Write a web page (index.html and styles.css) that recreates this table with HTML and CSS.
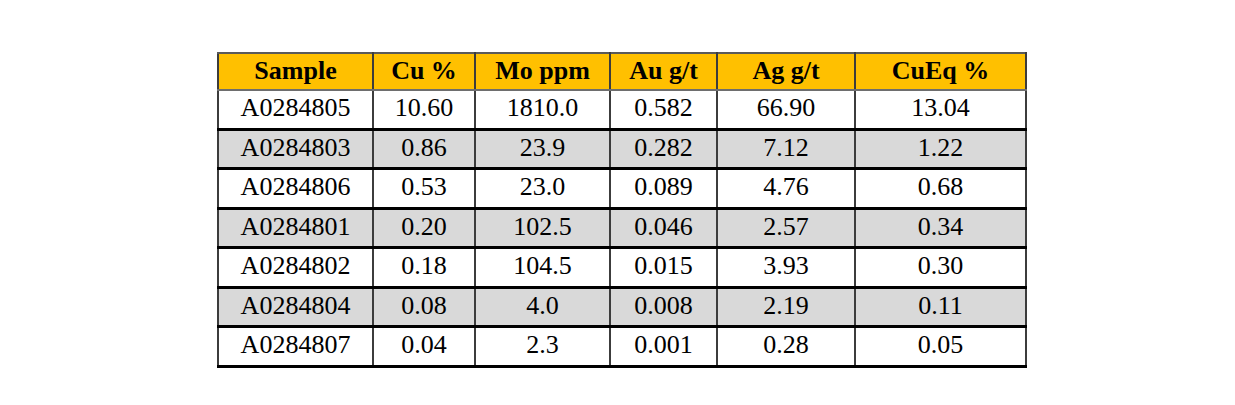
FILE: index.html
```html
<!DOCTYPE html>
<html>
<head>
<meta charset="utf-8">
<link rel="stylesheet" href="styles.css">
</head>
<body>
<div class="page">
<table class="assay">
  <colgroup>
    <col class="c1"><col class="c2"><col class="c3"><col class="c4"><col class="c5"><col class="c6">
  </colgroup>
  <thead>
    <tr><th>Sample</th><th>Cu %</th><th>Mo ppm</th><th>Au g/t</th><th>Ag g/t</th><th>CuEq %</th></tr>
  </thead>
  <tbody>
    <tr><td>A0284805</td><td>10.60</td><td>1810.0</td><td>0.582</td><td>66.90</td><td>13.04</td></tr>
    <tr class="alt"><td>A0284803</td><td>0.86</td><td>23.9</td><td>0.282</td><td>7.12</td><td>1.22</td></tr>
    <tr><td>A0284806</td><td>0.53</td><td>23.0</td><td>0.089</td><td>4.76</td><td>0.68</td></tr>
    <tr class="alt"><td>A0284801</td><td>0.20</td><td>102.5</td><td>0.046</td><td>2.57</td><td>0.34</td></tr>
    <tr><td>A0284802</td><td>0.18</td><td>104.5</td><td>0.015</td><td>3.93</td><td>0.30</td></tr>
    <tr class="alt"><td>A0284804</td><td>0.08</td><td>4.0</td><td>0.008</td><td>2.19</td><td>0.11</td></tr>
    <tr><td>A0284807</td><td>0.04</td><td>2.3</td><td>0.001</td><td>0.28</td><td>0.05</td></tr>
  </tbody>
</table>
</div>
</body>
</html>
```

FILE: styles.css
```css
html, body {
  margin: 0;
  padding: 0;
  background: #ffffff;
}
.page {
  padding: 52px 0 0 217px;
}
.assay {
  border-collapse: collapse;
  table-layout: fixed;
  width: 808px;
  font-family: "Liberation Serif", "Times New Roman", serif;
  font-size: 26px;
  color: #000;
}
.c1 { width: 155px; }
.c2 { width: 102px; }
.c3 { width: 135px; }
.c4 { width: 107px; }
.c5 { width: 138px; }
.c6 { width: 171px; }
.assay th, .assay td {
  padding: 0 0 2px 0;
  text-align: center;
  border-left: 2px solid #3c3c3c;
  border-right: 2px solid #3c3c3c;
  line-height: 1;
}
.assay th {
  background: #ffc000;
  font-weight: bold;
  height: 33px;
  border-top: 2px solid #5a5a5a;
  border-bottom: 2px solid #6e6e6e;
}
.assay td {
  height: 34.5px;
  border-bottom: 3px solid #000;
  background: #fff;
}
.assay tr.alt td {
  background: #d9d9d9;
}
```
